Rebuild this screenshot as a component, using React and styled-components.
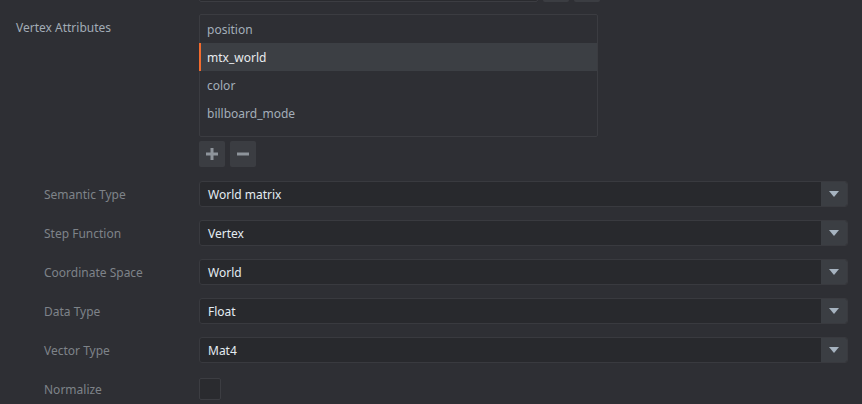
import { styled, createGlobalStyle } from "styled-components";

const GlobalStyle = createGlobalStyle`
    html, body {
        margin: 0;
        padding: 0;
        background: #2e2f34;
    }
    body {
        font-family: "Noto Sans", "Open Sans", sans-serif;
        font-size: 12px;
    }
`;

const attributes = ["position", "mtx_world", "color", "billboard_mode"];

const properties = [
    { label: "Semantic Type", value: "World matrix" },
    { label: "Step Function", value: "Vertex" },
    { label: "Coordinate Space", value: "World" },
    { label: "Data Type", value: "Float" },
    { label: "Vector Type", value: "Mat4" },
];

export default function App() {
    return (
        <Page>
            <GlobalStyle />
            <TopRow>
                <TopInput />
                <TopButton />
                <TopButton />
            </TopRow>

            <AttrRow>
                <Label>Vertex Attributes</Label>
                <AttrColumn>
                    <List>
                        {attributes.map((a) => (
                            <Item key={a} selected={a === "mtx_world"}>{a}</Item>
                        ))}
                    </List>
                    <Buttons>
                        <IconButton>
                            <svg width="14" height="14" viewBox="0 0 14 14">
                                <path d="M7 1v12M1 7h12" stroke="#8e949b" strokeWidth="3" />
                            </svg>
                        </IconButton>
                        <IconButton>
                            <svg width="14" height="14" viewBox="0 0 14 14">
                                <path d="M1 7h12" stroke="#8e949b" strokeWidth="3" />
                            </svg>
                        </IconButton>
                    </Buttons>
                </AttrColumn>
            </AttrRow>

            <Props>
                {properties.map((p) => (
                    <PropRow key={p.label}>
                        <SubLabel>{p.label}</SubLabel>
                        <Select>
                            <SelectValue>{p.value}</SelectValue>
                            <SelectArrow>
                                <svg width="10" height="6" viewBox="0 0 10 6">
                                    <path d="M0 0h10L5 6z" fill="#a6b3c0" />
                                </svg>
                            </SelectArrow>
                        </Select>
                    </PropRow>
                ))}
                <PropRow>
                    <SubLabel>Normalize</SubLabel>
                    <Checkbox />
                </PropRow>
            </Props>
        </Page>
    );
}

const Page = styled.div`
    width: 862px;
    height: 404px;
    overflow: hidden;
    background: #2e2f34;
`;

const TopRow = styled.div`
    display: flex;
    gap: 5px;
    margin-top: -24px;
    padding-left: 199px;
    height: 26px;
`;

const TopInput = styled.div`
    width: 337px;
    height: 24px;
    border: 1px solid #3c3d42;
    border-radius: 2px;
    background: #2a2b2f;
`;

const TopButton = styled.div`
    width: 26px;
    height: 26px;
    border-radius: 2px;
    background: #3b3d42;
`;

const AttrRow = styled.div`
    display: flex;
    margin-top: 12px;
`;

const Label = styled.div`
    width: 183px;
    padding-left: 16px;
    padding-top: 5px;
    color: #a2acb6;
    line-height: 18px;
`;

const AttrColumn = styled.div`
    display: flex;
    flex-direction: column;
    gap: 4px;
`;

const List = styled.div`
    width: 397px;
    height: 121px;
    border: 1px solid #3b3c41;
    border-radius: 2px;
`;

const Item = styled.div`
    height: 28px;
    line-height: 30px;
    overflow: hidden;
    padding-left: ${(p) => (p.selected ? "6px" : "7px")};
    border-left: ${(p) => (p.selected ? "2px solid #f26b2e" : "none")};
    margin-left: ${(p) => (p.selected ? "-1px" : "0")};
    background: ${(p) => (p.selected ? "#3c3f44" : "transparent")};
    color: ${(p) => (p.selected ? "#e8ebee" : "#a3aeb9")};
`;

const Buttons = styled.div`
    display: flex;
    gap: 5px;
`;

const IconButton = styled.div`
    width: 26px;
    height: 26px;
    border-radius: 2px;
    background: #3b3d42;
    display: flex;
    align-items: center;
    justify-content: center;
`;

const Props = styled.div`
    display: flex;
    flex-direction: column;
    gap: 13px;
    margin-top: 14px;
`;

const PropRow = styled.div`
    display: flex;
    align-items: center;
    height: 26px;
`;

const SubLabel = styled.div`
    width: 155px;
    padding-left: 44px;
    color: #7e8389;
`;

const Select = styled.div`
    display: flex;
    width: 649px;
    height: 26px;
    box-sizing: border-box;
    border: 1px solid #393a3f;
    border-radius: 3px;
    background: #28292d;
    overflow: hidden;
`;

const SelectValue = styled.div`
    flex: 1;
    padding-left: 8px;
    line-height: 26px;
    color: #e4ecf3;
`;

const SelectArrow = styled.div`
    width: 26px;
    background: #3b3e43;
    display: flex;
    align-items: center;
    justify-content: center;
`;

const Checkbox = styled.div`
    width: 22px;
    height: 22px;
    box-sizing: border-box;
    border: 1px solid #3c3d42;
    border-radius: 2px;
    background: #2a2b2f;
`;
